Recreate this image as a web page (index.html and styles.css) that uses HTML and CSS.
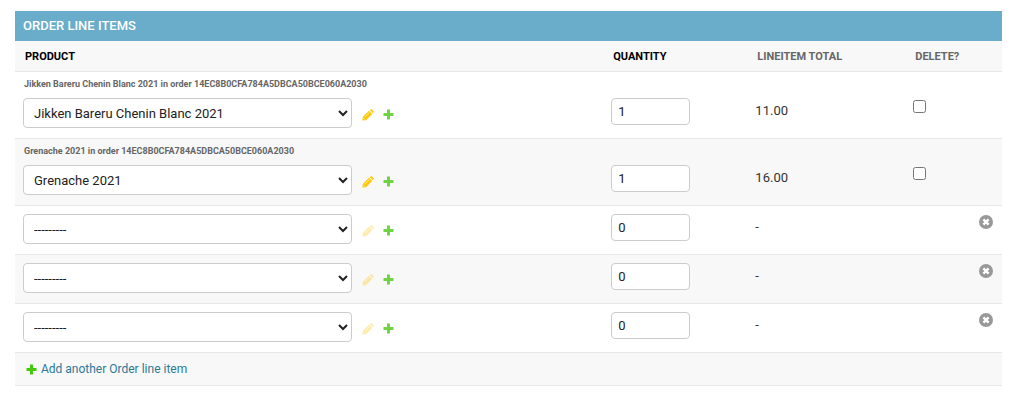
FILE: index.html
```html
<!DOCTYPE html>
<html lang="en">
<head>
<meta charset="utf-8">
<title>Order line items</title>
<link rel="stylesheet" href="styles.css">
</head>
<body>
<svg class="sprite" aria-hidden="true">
  <symbol id="pencil" viewBox="0 0 12 12"><path d="M.4 11.6.8 8 7 1.8 10.2 5 4 11.2Z"/><path d="M7.7 1.1 8.4.5Q9.2 0 9.9.6L11.4 2.1Q12 2.9 11.4 3.6L10.9 4.3Z"/><path class="shine" d="M3 8 7.6 3.4M1.4 9.2 2.8 10.6"/></symbol>
  <symbol id="plus" viewBox="0 0 11 11"><path d="M4 0.5h3v3.5h3.5v3H7v3.5H4V7H.5V4H4Z"/></symbol>
  <symbol id="remove" viewBox="0 0 14 14"><circle cx="7" cy="7" r="7"/><path class="cross" d="M4.4 4.4 9.6 9.6M9.6 4.4 4.4 9.6"/></symbol>
</svg>
<form class="inline-group">
  <h2 class="group-title">Order line items</h2>
  <table class="items">
    <thead>
      <tr>
        <th class="col-product required" scope="col">Product</th>
        <th class="col-quantity required" scope="col">Quantity</th>
        <th class="col-total" scope="col">Lineitem total</th>
        <th class="col-delete" scope="col">Delete?</th>
      </tr>
    </thead>
    <tbody>
      <tr class="saved">
        <td>
          <p class="original">Jikken Bareru Chenin Blanc 2021 in order 14EC8B0CFA784A5DBCA50BCE060A2030</p>
          <div class="related">
            <select class="product" aria-label="Product"><option>Jikken Bareru Chenin Blanc 2021</option></select>
            <a class="change" href="#" aria-label="Change product"><svg class="pencil"><use href="#pencil"/></svg></a>
            <a class="add" href="#" aria-label="Add product"><svg class="plus"><use href="#plus"/></svg></a>
          </div>
        </td>
        <td><input class="quantity" type="text" value="1" aria-label="Quantity"></td>
        <td><p class="total">11.00</p></td>
        <td><input class="delete" type="checkbox" aria-label="Delete"></td>
      </tr>
      <tr class="saved">
        <td>
          <p class="original">Grenache 2021 in order 14EC8B0CFA784A5DBCA50BCE060A2030</p>
          <div class="related">
            <select class="product" aria-label="Product"><option>Grenache 2021</option></select>
            <a class="change" href="#" aria-label="Change product"><svg class="pencil"><use href="#pencil"/></svg></a>
            <a class="add" href="#" aria-label="Add product"><svg class="plus"><use href="#plus"/></svg></a>
          </div>
        </td>
        <td><input class="quantity" type="text" value="1" aria-label="Quantity"></td>
        <td><p class="total">16.00</p></td>
        <td><input class="delete" type="checkbox" aria-label="Delete"></td>
      </tr>
      <tr>
        <td>
          <div class="related">
            <select class="product" aria-label="Product"><option>---------</option></select>
            <a class="change disabled" aria-label="Change product"><svg class="pencil"><use href="#pencil"/></svg></a>
            <a class="add" href="#" aria-label="Add product"><svg class="plus"><use href="#plus"/></svg></a>
          </div>
        </td>
        <td><input class="quantity" type="text" value="0" aria-label="Quantity"></td>
        <td><p class="total">-</p></td>
        <td><button class="remove" type="button" aria-label="Remove"><svg class="cross-icon"><use href="#remove"/></svg></button></td>
      </tr>
      <tr>
        <td>
          <div class="related">
            <select class="product" aria-label="Product"><option>---------</option></select>
            <a class="change disabled" aria-label="Change product"><svg class="pencil"><use href="#pencil"/></svg></a>
            <a class="add" href="#" aria-label="Add product"><svg class="plus"><use href="#plus"/></svg></a>
          </div>
        </td>
        <td><input class="quantity" type="text" value="0" aria-label="Quantity"></td>
        <td><p class="total">-</p></td>
        <td><button class="remove" type="button" aria-label="Remove"><svg class="cross-icon"><use href="#remove"/></svg></button></td>
      </tr>
      <tr>
        <td>
          <div class="related">
            <select class="product" aria-label="Product"><option>---------</option></select>
            <a class="change disabled" aria-label="Change product"><svg class="pencil"><use href="#pencil"/></svg></a>
            <a class="add" href="#" aria-label="Add product"><svg class="plus"><use href="#plus"/></svg></a>
          </div>
        </td>
        <td><input class="quantity" type="text" value="0" aria-label="Quantity"></td>
        <td><p class="total">-</p></td>
        <td><button class="remove" type="button" aria-label="Remove"><svg class="cross-icon"><use href="#remove"/></svg></button></td>
      </tr>
      <tr class="add-row">
        <td colspan="4"><a class="add-link" href="#"><svg class="plus"><use href="#plus"/></svg>Add another Order line item</a></td>
      </tr>
    </tbody>
  </table>
</form>
</body>
</html>
```

FILE: styles.css
```css
* { box-sizing: border-box; }

body {
  margin: 0;
  padding: 11px 19px 18px 15px;
  background: #fff;
  color: #333;
  font-family: Roboto, "Liberation Sans", sans-serif;
  font-size: 13px;
  line-height: 16px;
}

h2, p { margin: 0; }
svg { display: block; }

.sprite {
  position: absolute;
  width: 0;
  height: 0;
}

.group-title {
  padding: 7px 8px;
  background: #69adcb;
  color: #fff;
  font-size: 13px;
  font-weight: 500;
  line-height: 16px;
  text-transform: uppercase;
}

.items {
  width: 100%;
  table-layout: fixed;
  border-collapse: separate;
  border-spacing: 0;
}

.items th {
  padding: 8px 10px 6px;
  background: #f8f8f8;
  border-bottom: 1px solid #e8e8e8;
  color: #666;
  font-size: 11px;
  font-weight: 700;
  line-height: 16px;
  text-align: left;
  text-transform: uppercase;
}

.items th.required { color: #000; }
.col-product { width: 59.6%; }
.col-quantity { width: 14.6%; }
.col-total { width: 16%; }

.items td {
  padding: 8px;
  border-bottom: 1px solid #e8e8e8;
  vertical-align: top;
}

.items tbody tr:nth-child(even) { background: #f8f8f8; }
.items .saved td { padding: 26px 8px 10px; }
.items .saved td:first-child { padding-top: 4px; }

.original {
  padding: 0 1px 6px;
  color: #666;
  font-size: 9px;
  font-weight: 700;
  line-height: 16px;
}

.related {
  display: flex;
  align-items: center;
  gap: 10px;
  margin-bottom: 2px;
}

.saved .related { margin-bottom: 0; }

.product {
  width: 329px;
  height: 30px;
  padding: 0 6px;
  border: 1px solid #ccc;
  border-radius: 4px;
  background-color: #fff;
  color: #222;
  font: 13px Roboto, "Liberation Sans", sans-serif;
}

.change, .add { padding-top: 3px; }
.change.disabled { opacity: 0.35; }

.pencil {
  width: 12px;
  height: 12px;
  fill: #fdc70c;
}

.shine {
  fill: none;
  stroke: #ffe68a;
  stroke-width: 1;
}

.plus {
  width: 11px;
  height: 11px;
  fill: #70d346;
}

.change + .add { margin-left: -1px; }

.quantity {
  display: block;
  width: 79px;
  height: 27px;
  padding: 5px 6px;
  border: 1px solid #ccc;
  border-radius: 4px;
  background: #fff;
  color: #222;
  font: 13px Roboto, "Liberation Sans", sans-serif;
}

.total { padding-top: 5px; }

.delete {
  display: block;
  width: 13px;
  height: 13px;
  margin: 2px 0 0;
}

.remove {
  display: block;
  margin: 0 0 0 auto;
  padding: 1px;
  border: 0;
  background: none;
}

.cross-icon {
  width: 14px;
  height: 14px;
  fill: #999;
}

.cross {
  stroke: #fff;
  stroke-width: 2.4;
}

.items .add-row td { padding: 8px 11px; }

.add-link {
  display: flex;
  align-items: center;
  gap: 4px;
  color: #2b7a98;
  font-size: 12px;
  text-decoration: none;
}

.add-link .plus { fill: #44c90a; }
```
